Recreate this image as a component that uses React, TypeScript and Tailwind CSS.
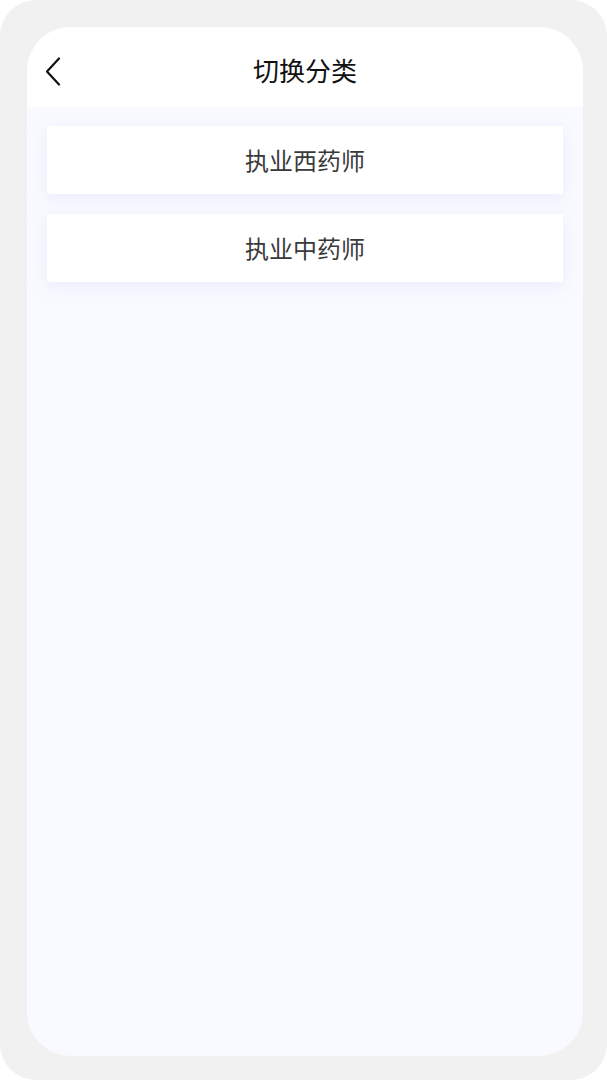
const categories = ["执业西药师", "执业中药师"];

export default function App() {
  return (
    <div className="w-[607px] h-[1080px] bg-white" style={{ fontFamily: '"Noto Sans CJK SC", "Noto Sans", sans-serif' }}>
      <div className="w-full h-full bg-[#f1f1f1] rounded-[36px] pt-[27px] pl-[27px] pr-[24px] pb-[24px]">
        <div className="w-full h-full rounded-[44px] overflow-hidden bg-[#f8faff] flex flex-col">
          {/* Header */}
          <div className="relative h-[80px] bg-white flex items-center justify-center shrink-0">
            <button className="absolute left-[18px] top-[30px]">
              <svg width="16" height="29" viewBox="0 0 16 29" fill="none">
                <path d="M14 1.5 L2 14.5 L14 27.5" stroke="#111" strokeWidth="2.2" strokeLinecap="round" strokeLinejoin="round" />
              </svg>
            </button>
            <h1 className="text-[26px] text-[#111] leading-none mt-[5px]">切换分类</h1>
          </div>

          {/* List */}
          <div className="flex flex-col gap-[20px] px-[20px] pt-[19px]">
            {categories.map((c) => (
              <div
                key={c}
                className="h-[68px] bg-white flex items-center justify-center shadow-[0_4px_14px_rgba(200,215,240,0.35)]"
              >
                <span className="text-[24px] text-[#3a3a3a] -mt-[1px]">{c}</span>
              </div>
            ))}
          </div>
        </div>
      </div>
    </div>
  );
}
